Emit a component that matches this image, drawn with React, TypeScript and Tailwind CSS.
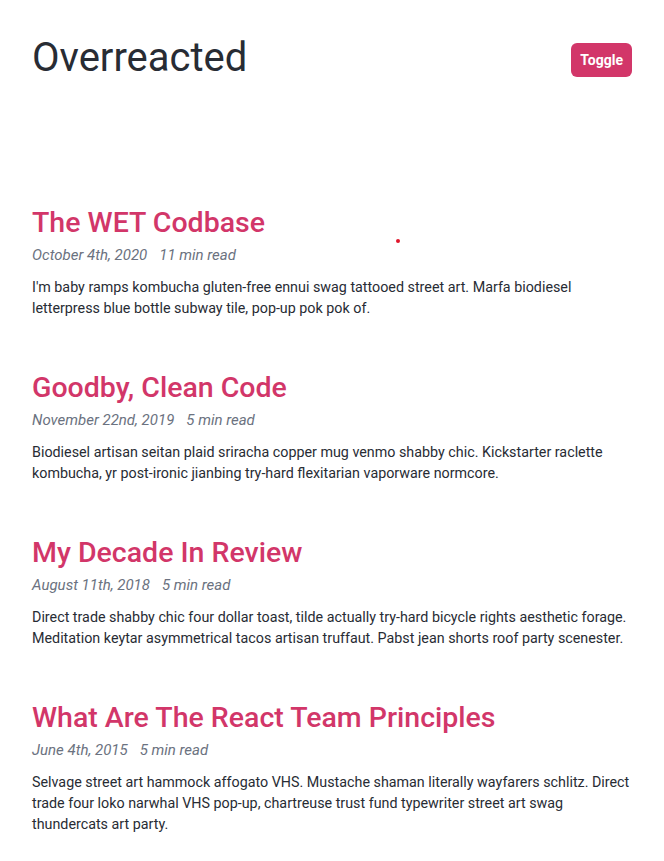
import React from 'react';

const POSTS = [
  {
    title: 'The WET Codbase',
    date: 'October 4th, 2020',
    read: '11 min read',
    body: "I'm baby ramps kombucha gluten-free ennui swag tattooed street art. Marfa biodiesel letterpress blue bottle subway tile, pop-up pok pok of.",
  },
  {
    title: 'Goodby, Clean Code',
    date: 'November 22nd, 2019',
    read: '5 min read',
    body: 'Biodiesel artisan seitan plaid sriracha copper mug venmo shabby chic. Kickstarter raclette kombucha, yr post-ironic jianbing try-hard flexitarian vaporware normcore.',
  },
  {
    title: 'My Decade In Review',
    date: 'August 11th, 2018',
    read: '5 min read',
    body: 'Direct trade shabby chic four dollar toast, tilde actually try-hard bicycle rights aesthetic forage. Meditation keytar asymmetrical tacos artisan truffaut. Pabst jean shorts roof party scenester.',
  },
  {
    title: 'What Are The React Team Principles',
    date: 'June 4th, 2015',
    read: '5 min read',
    body: 'Selvage street art hammock affogato VHS. Mustache shaman literally wayfarers schlitz. Direct trade four loko narwhal VHS pop-up, chartreuse trust fund typewriter street art swag thundercats art party.',
  },
];

const App: React.FC = () => {
  return (
    <div className="min-h-screen bg-white font-['Roboto',sans-serif] text-[#282c34] relative">
      <div className="w-[600px] ml-8 pt-[33px]">
        <header className="flex justify-between items-center">
          <h1 className="text-[40px] leading-[50px] font-normal">Overreacted</h1>
          <button className="mt-1 h-[34px] px-[9px] rounded-md bg-[#d23669] text-white text-sm font-bold">
            Toggle
          </button>
        </header>
        <main className="mt-[120px]">
          {POSTS.map((p) => (
            <article key={p.title} className="mb-[49px]">
              <h2 className="text-[28.5px] leading-[40px] text-[#d23669] font-medium">{p.title}</h2>
              <div className="flex gap-3 italic text-[15px] leading-[24px] text-[#6b7280]">
                <span>{p.date}</span>
                <span>{p.read}</span>
              </div>
              <p className="mt-[10px] text-[14.3px] leading-[21px]">{p.body}</p>
            </article>
          ))}
        </main>
      </div>
      <span className="absolute left-[396px] top-[239px] w-1 h-1 rounded-full bg-[#e0162b]" />
    </div>
  );
};

export default App;
